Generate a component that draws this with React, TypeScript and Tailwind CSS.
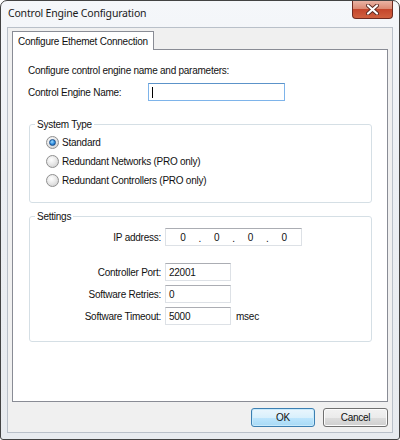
import React from 'react'

const ui = { fontFamily: '"Liberation Sans", Arial, sans-serif' }
const t = 'text-[10px] tracking-[-0.25px] text-[#111]'

function Radio({ label, checked }: { label: string; checked?: boolean }) {
  return (
    <div className="flex items-center h-[19px]">
      <span className="w-[13px] h-[13px] rounded-full border border-[#8f8f8f] bg-[radial-gradient(circle_at_40%_35%,#ffffff_0%,#e9e9e9_45%,#c9c9c9_100%)] flex items-center justify-center">
        {checked && (
          <span className="w-[7px] h-[7px] rounded-full border border-[#1b4f8a] bg-[radial-gradient(circle_at_40%_35%,#9fdcff_0%,#2f8de0_55%,#0d4d94_100%)]" />
        )}
      </span>
      <span className={`ml-[3px] ${t}`}>{label}</span>
    </div>
  )
}

function TextBox({ value, w = 'w-[66px]', focused }: { value?: string; w?: string; focused?: boolean }) {
  return (
    <div
      className={`${w} h-[18px] bg-white border flex items-center pl-[3px] ${t} ${
        focused ? 'border-[#7eb4ea] border-t-[#5c93c9]' : 'border-[#dde1e6] border-t-[#abadb3]'
      }`}
    >
      {focused ? <span className="w-px h-[11px] bg-black" /> : value}
    </div>
  )
}

function Row({ label, children }: { label: string; children: React.ReactNode }) {
  return (
    <div className="flex items-center">
      <span className={`w-[135px] text-right pr-[4px] ${t}`}>{label}</span>
      {children}
    </div>
  )
}

export default function App() {
  return (
    <div style={ui} className="w-[400px] h-[440px] rounded-t-[7px] rounded-b-[3px] border border-[#434343] bg-[linear-gradient(180deg,#f5f7fa_0%,#eceff3_40%,#e8ebef_100%)] flex flex-col overflow-hidden">
      {/* title bar */}
      <div className="h-[26px] flex items-start shrink-0">
        <span className="pl-[7px] pt-[5px] text-[10.5px] tracking-[-0.2px] text-[#1a1a1a]" style={{ fontFamily: '"Noto Sans", "Liberation Sans", sans-serif' }}>
          Control Engine Configuration
        </span>
        <div className="ml-auto mr-[6px] w-[41px] h-[18px] rounded-b-[4px] border border-t-0 border-[#6e2a20] bg-[linear-gradient(180deg,#eab3a4_0%,#dc8a74_45%,#c4462c_50%,#d0603f_100%)] flex items-center justify-center">
          <svg width="13" height="11" viewBox="0 0 13 11">
            <path d="M2 1.5 L11 9.5 M11 1.5 L2 9.5" stroke="#5b2a22" strokeWidth="4" strokeLinecap="round" />
            <path d="M2 1.5 L11 9.5 M11 1.5 L2 9.5" stroke="#ffffff" strokeWidth="2.2" strokeLinecap="round" />
          </svg>
        </div>
      </div>

      {/* client area */}
      <div className="mx-[6px] mb-[6px] flex-1 border border-[#b9c0c9] bg-[#f0f0f0] flex flex-col px-[4px] pt-[3px]">
        {/* tab header */}
        <div className="flex">
          <div className={`h-[19px] -mb-px relative z-10 px-[5px] bg-white border border-b-0 border-[#898c95] flex items-center ${t}`}>
            Configure Ethemet Connection
          </div>
        </div>

        {/* tab panel */}
        <div className="h-[353px] bg-white border border-[#898c95] pl-[15px] pr-[15px] pt-[14px]">
          <div className={`${t} leading-[13px]`}>Configure control engine name and parameters:</div>
          <div className="flex items-center mt-[6px]">
            <span className={`w-[120px] ${t}`}>Control Engine Name:</span>
            <TextBox w="w-[137px]" focused />
          </div>

          <fieldset className="mt-[17px] ml-[1px] w-[343px] h-[85px] border border-[#d5dfe5] rounded-[3px]">
            <legend className={`ml-[5px] px-[2px] leading-[13px] ${t}`}>System Type</legend>
            <div className="pl-[16px] pt-[2px]">
              <Radio label="Standard" checked />
              <Radio label="Redundant Networks (PRO only)" />
              <Radio label="Redundant Controllers (PRO only)" />
            </div>
          </fieldset>

          <fieldset className="mt-[7px] ml-[1px] w-[343px] h-[132px] border border-[#d5dfe5] rounded-[3px]">
            <legend className={`ml-[5px] px-[2px] leading-[13px] ${t}`}>Settings</legend>
            <div className="pt-[5px] flex flex-col">
              <Row label="IP address:">
                <div className={`w-[137px] h-[18px] bg-white border border-[#dde1e6] border-t-[#abadb3] grid grid-cols-4 ${t}`}>
                  {['0', '0', '0', '0'].map((v, i) => (
                    <div key={i} className="relative flex items-center justify-center">
                      {v}
                      {i < 3 && <span className="absolute right-0 translate-x-1/2 top-[2px]">.</span>}
                    </div>
                  ))}
                </div>
              </Row>
              <div className="h-[17px]" />
              <Row label="Controller Port:">
                <TextBox value="22001" />
              </Row>
              <div className="h-[4px]" />
              <Row label="Software Retries:">
                <TextBox value="0" />
              </Row>
              <div className="h-[4px]" />
              <Row label="Software Timeout:">
                <TextBox value="5000" />
                <span className={`ml-[5px] ${t}`}>msec</span>
              </Row>
            </div>
          </fieldset>
        </div>

        {/* buttons */}
        <div className="flex justify-end gap-[8px] mt-[6px]">
          <button className={`w-[64px] h-[19px] rounded-[3px] border border-[#3c7fb1] bg-[linear-gradient(180deg,#eaf6fd_0%,#d9f0fc_50%,#bee6fd_51%,#a7d9f5_100%)] shadow-[inset_0_0_0_1px_#c8eafc] ${t}`}>
            OK
          </button>
          <button className={`w-[65px] h-[19px] rounded-[3px] border border-[#707070] bg-[linear-gradient(180deg,#f2f2f2_0%,#ebebeb_50%,#dddddd_51%,#cfcfcf_100%)] shadow-[inset_0_0_0_1px_#fcfcfc] ${t}`}>
            Cancel
          </button>
        </div>
      </div>
    </div>
  )
}
